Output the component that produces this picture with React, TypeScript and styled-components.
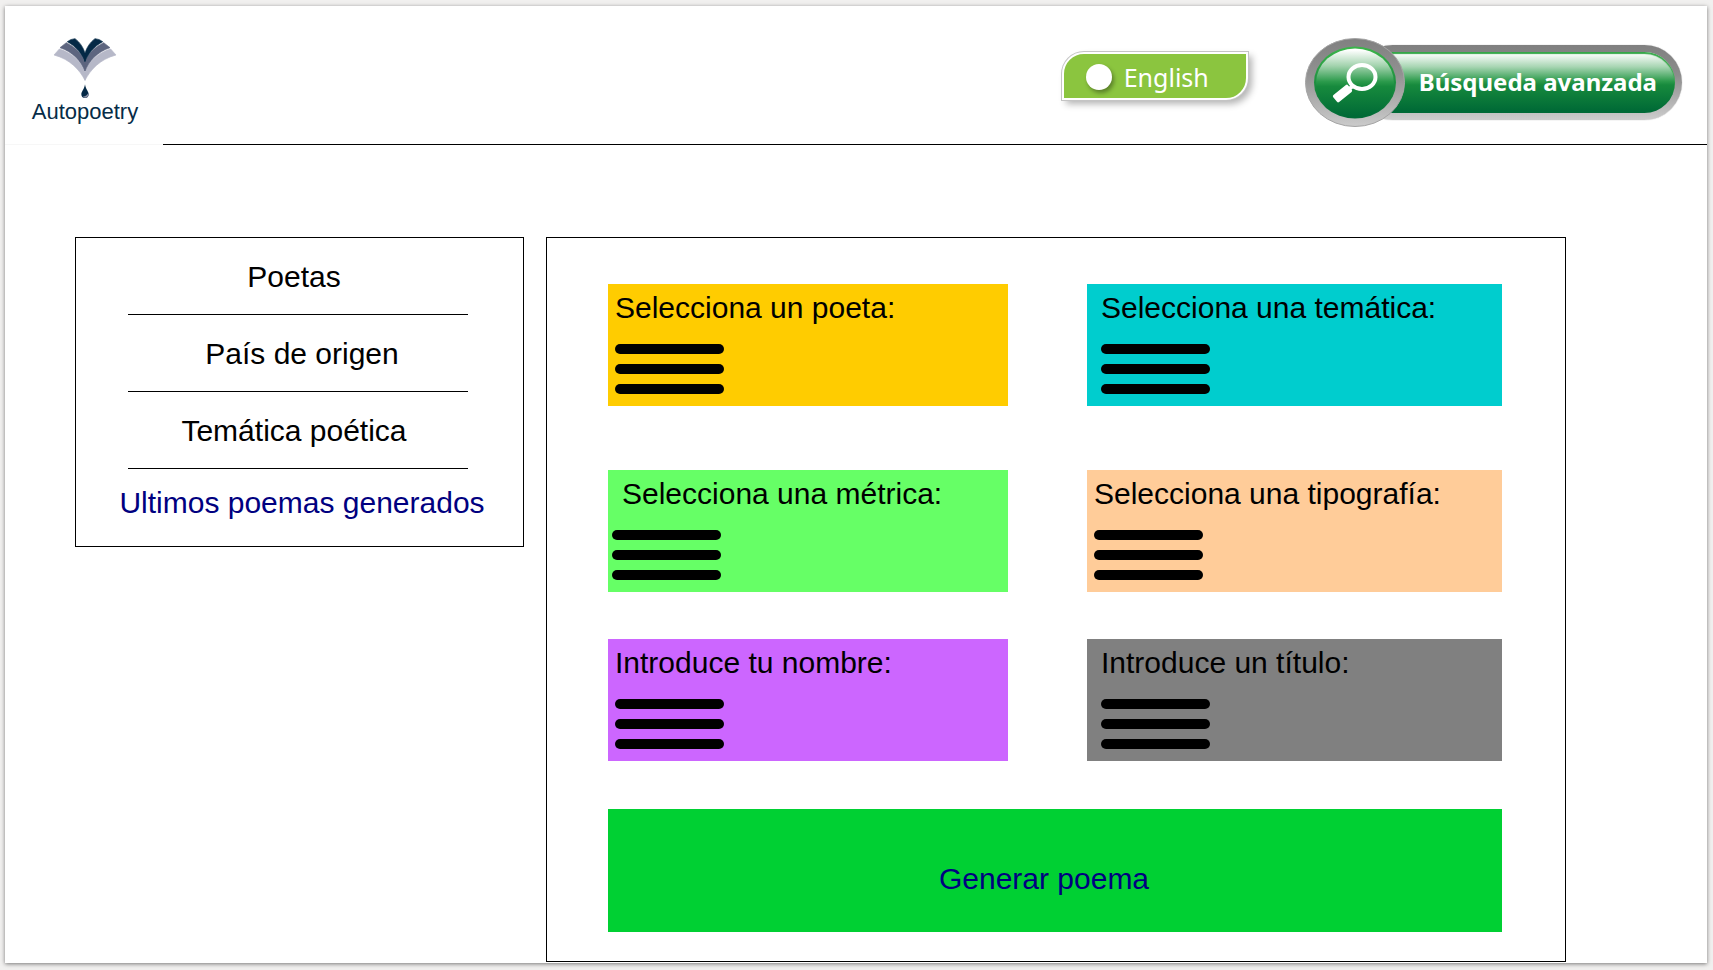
import React from "react";
import styled, { createGlobalStyle } from "styled-components";

const GlobalStyle = createGlobalStyle`
  *, *::before, *::after { box-sizing: border-box; }
  body {
    margin: 0;
    background: #f1f0ef;
    color: #000;
    font-family: "Liberation Sans", Arial, sans-serif;
    font-size: 30px;
    line-height: 34px;
  }
  button { font: inherit; border: 0; margin: 0; cursor: pointer; }
`;

const Frame = styled.div`
  min-height: 100vh;
  padding: 6px 6px 7px 5px;
  display: flex;
`;

const Sheet = styled.div`
  flex: 1;
  display: flex;
  flex-direction: column;
  background: #fff;
  box-shadow: 0 1px 4px rgba(0, 0, 0, 0.5);
`;

const Header = styled.header`
  display: flex;
  height: 139px;
`;

const Brand = styled.a`
  width: 158px;
  padding: 29px 0 0 2px;
  display: flex;
  flex-direction: column;
  align-items: center;
  border-bottom: 1px solid #f7f7f7;
  color: #062c48;
  font-size: 22px;
  line-height: 20px;
  text-decoration: none;
`;

const HeaderActions = styled.div`
  flex: 1;
  display: flex;
  justify-content: flex-end;
  align-items: flex-start;
  gap: 57px;
  padding: 32px 25px 0 0;
  border-bottom: 1px solid #000;
`;

const LanguageButton = styled.button`
  display: flex;
  align-items: center;
  gap: 12px;
  width: 186px;
  height: 48px;
  margin-top: 14px;
  padding: 2px 0 0 22px;
  border: 2px solid #fff;
  border-radius: 22px 0 22px 0;
  background: #8bc53f;
  box-shadow: 0 0 0 1px #c4c4c4, 4px 4px 7px rgba(0, 0, 0, 0.3);
  color: #fff;
  font-family: "Noto Sans", sans-serif;
  font-size: 25px;
`;

const Knob = styled.span`
  width: 26px;
  height: 26px;
  border-radius: 50%;
  background: #fff;
  box-shadow: 2px 3px 4px rgba(0, 0, 0, 0.35);
`;

const SearchButton = styled.button`
  display: flex;
  align-items: center;
  padding: 0;
  background: none;
`;

const Lens = styled.svg`
  position: relative;
  z-index: 1;
  flex: none;
`;

const SearchPill = styled.span`
  display: flex;
  align-items: center;
  height: 75px;
  margin-left: -50px;
  padding: 0 18px 2px 57px;
  border: 7px solid transparent;
  border-radius: 38px;
  background:
    linear-gradient(#fff 2%, #a9d6b4 24%, #2b9a4b 48%, #178a3d 54%, #006a36 96%) padding-box,
    linear-gradient(#808080, #8c8c8c 40%, #cdcdcd) border-box;
  box-shadow: inset 0 2px 1px #35a748, 0 0 1px #999;
  color: #fff;
  font-family: "Noto Sans", sans-serif;
  font-size: 24px;
  font-weight: 700;
  line-height: 32px;
  white-space: nowrap;
`;

const Content = styled.div`
  flex: 1;
  display: flex;
  align-items: flex-start;
  gap: 22px;
  padding: 92px 141px 1px 70px;
`;

const Sidebar = styled.nav`
  width: 449px;
  border: 1px solid #000;
  padding: 0 55px 26px 52px;
`;

const MenuList = styled.ul`
  list-style: none;
  margin: 0;
  padding: 0;
`;

const MenuItem = styled.li<{ $lean: "left" | "right" }>`
  display: flex;
  justify-content: center;
  padding: ${(p) => (p.$lean === "left" ? "22px 8px 20px 0" : "22px 0 20px 8px")};
  border-bottom: 1px solid #000;
  white-space: nowrap;

  &:last-child {
    border-bottom: 0;
    padding-top: 17px;
    padding-bottom: 0;
  }
`;

const MenuLink = styled.a<{ $accent?: boolean }>`
  color: ${(p) => (p.$accent ? "#000080" : "#000")};
  text-decoration: none;
`;

const Panel = styled.main`
  flex: 1;
  align-self: stretch;
  border: 1px solid #000;
  padding: 46px 63px 29px 61px;
`;

const Options = styled.div`
  display: grid;
  grid-template-columns: 400fr 415fr;
  grid-template-rows: 139px auto auto;
  align-items: start;
  gap: 47px 79px;
`;

const Card = styled.section<{ $color: string }>`
  height: 122px;
  padding-top: 7px;
  background: ${(p) => p.$color};
`;

const CardTitle = styled.h2<{ $inset: number }>`
  margin: 0;
  padding-left: ${(p) => p.$inset}px;
  font-size: 30px;
  font-weight: 400;
  white-space: nowrap;
`;

const BarsButton = styled.button<{ $inset: number }>`
  display: flex;
  flex-direction: column;
  gap: 10px;
  width: 109px;
  margin: 19px 0 0 ${(p) => p.$inset}px;
  padding: 0;
  background: none;
`;

const Bar = styled.span`
  width: 100%;
  height: 10px;
  border-radius: 5px;
  background: #000;
`;

const GenerateButton = styled.button`
  display: block;
  width: 100%;
  height: 123px;
  margin-top: 48px;
  padding: 16px 22px 0 0;
  background: #00d033;
  color: #000080;
`;

const menu: { text: string; lean: "left" | "right"; accent?: boolean }[] = [
  { text: "Poetas", lean: "left" },
  { text: "País de origen", lean: "right" },
  { text: "Temática poética", lean: "left" },
  { text: "Ultimos poemas generados", lean: "right", accent: true },
];

const cards = [
  { id: "poeta", text: "Selecciona un poeta:", color: "#ffcc00", title: 7, bars: 7 },
  { id: "tematica", text: "Selecciona una temática:", color: "#00cdce", title: 14, bars: 14 },
  { id: "metrica", text: "Selecciona una métrica:", color: "#66ff66", title: 14, bars: 4 },
  { id: "tipografia", text: "Selecciona una tipografía:", color: "#ffcc99", title: 7, bars: 7 },
  { id: "nombre", text: "Introduce tu nombre:", color: "#cc66ff", title: 7, bars: 7 },
  { id: "titulo", text: "Introduce un título:", color: "#808080", title: 14, bars: 14 },
];

function Wing() {
  return (
    <g strokeWidth="2">
      <path
        fill="#b6b8c8"
        stroke="#b6b8c8"
        d="M163 165 L179 147 C218 158 244 185 256 215 V241 C240 210 212 178 163 165Z"
      />
      <path
        fill="#5d657f"
        stroke="#5d657f"
        d="M181 143 L200 128 C230 142 248 165 256 186 V213 C244 183 220 156 181 143Z"
      />
      <path
        fill="#042946"
        stroke="#042946"
        d="M203 125 Q212 117 226 116 C242 128 251 143 256 160 V185 C248 163 230 139 203 125Z"
      />
    </g>
  );
}

function BookLogo() {
  return (
    <svg width="70" height="67" viewBox="151 105 210 201" aria-hidden="true">
      <Wing />
      <g transform="translate(512 0) scale(-1 1)">
        <Wing />
      </g>
      <path fill="#042946" d="M256 253 C254 268 245 275 245 283 A11 11 0 0 0 267 283 C267 275 258 268 256 253Z" />
      <path fill="#8d92a8" d="M266 279 Q262 288 249 290 Q256 296 263 291 Q268 286 266 279Z" />
    </svg>
  );
}

function LensIcon() {
  return (
    <Lens width="100" height="89" viewBox="0 0 100 89" aria-hidden="true">
      <defs>
        <linearGradient id="ring" x1="0" y1="0" x2="0" y2="1">
          <stop offset="0" stopColor="#808080" />
          <stop offset="0.4" stopColor="#919191" />
          <stop offset="1" stopColor="#cbcbcb" />
        </linearGradient>
        <linearGradient id="glass" x1="0" y1="0" x2="0" y2="1">
          <stop offset="0.02" stopColor="#fff" />
          <stop offset="0.25" stopColor="#a3d3ae" />
          <stop offset="0.48" stopColor="#2b9a4b" />
          <stop offset="0.55" stopColor="#178a3d" />
          <stop offset="0.98" stopColor="#006a36" />
        </linearGradient>
        <linearGradient id="rim" x1="0" y1="0" x2="0" y2="1">
          <stop offset="0" stopColor="#3bb54a" />
          <stop offset="1" stopColor="#006a36" />
        </linearGradient>
      </defs>
      <ellipse cx="50" cy="44.5" rx="49.5" ry="44" fill="url(#ring)" stroke="#a5a5a5" />
      <ellipse cx="50" cy="44.5" rx="41" ry="36" fill="url(#rim)" />
      <ellipse cx="50" cy="45" rx="39" ry="34.5" fill="url(#glass)" />
      <ellipse cx="57" cy="39" rx="13.5" ry="12" fill="none" stroke="#fff" strokeWidth="4" />
      <path d="M44 51 L48 48" stroke="#fff" strokeWidth="4" />
      <rect x="-9.5" y="-4.5" width="19" height="9" rx="1.5" fill="#fff" transform="translate(37.5 55.5) rotate(-39)" />
    </Lens>
  );
}

export default function App() {
  return (
    <Frame>
      <GlobalStyle />
      <Sheet>
        <Header>
          <Brand href="#">
            <BookLogo />
            Autopoetry
          </Brand>
          <HeaderActions>
            <LanguageButton type="button">
              <Knob />
              English
            </LanguageButton>
            <SearchButton type="button">
              <LensIcon />
              <SearchPill>Búsqueda avanzada</SearchPill>
            </SearchButton>
          </HeaderActions>
        </Header>
        <Content>
          <Sidebar>
            <MenuList>
              {menu.map((m) => (
                <MenuItem key={m.text} $lean={m.lean}>
                  <MenuLink href="#" $accent={m.accent}>
                    {m.text}
                  </MenuLink>
                </MenuItem>
              ))}
            </MenuList>
          </Sidebar>
          <Panel>
            <Options>
              {cards.map((c) => (
                <Card key={c.id} $color={c.color}>
                  <CardTitle id={c.id} $inset={c.title}>
                    {c.text}
                  </CardTitle>
                  <BarsButton type="button" $inset={c.bars} aria-labelledby={c.id}>
                    <Bar />
                    <Bar />
                    <Bar />
                  </BarsButton>
                </Card>
              ))}
            </Options>
            <GenerateButton type="button">Generar poema</GenerateButton>
          </Panel>
        </Content>
      </Sheet>
    </Frame>
  );
}
